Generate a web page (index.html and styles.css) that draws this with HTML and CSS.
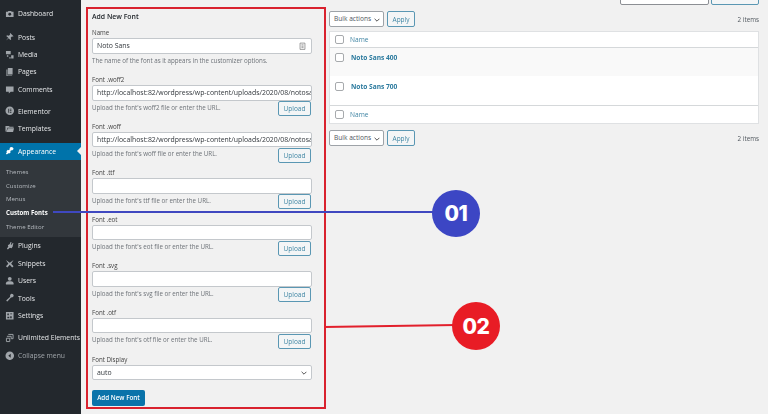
FILE: index.html
```html
<!DOCTYPE html>
<html lang="en">
<head>
<meta charset="utf-8">
<title>Custom Fonts</title>
<link rel="stylesheet" href="styles.css">
</head>
<body>
<div class="page">
  <nav class="sidebar">
    <ul class="group first">
      <li class="item"><svg class="ico" viewBox="0 0 20 20"><path d="M2 6h4l1-2h6l1 2h4v11H2z"/><circle cx="10" cy="11" r="3" fill="#23282d"/></svg>Dashboard</li>
    </ul>
    <ul class="group posts">
      <li class="item"><svg class="ico" viewBox="0 0 20 20"><path d="M11 2l7 7-2 1-1-1-3 3 1 4-2 1-3-4-6 5 5-6-4-3 1-2 4 1 3-3-1-1z"/></svg>Posts</li>
      <li class="item"><svg class="ico" viewBox="0 0 20 20"><path d="M2 2h10v7H2zM4 11h3v3H4zM13 11h5v7h-5zM9 15h3v3H9z"/></svg>Media</li>
      <li class="item"><svg class="ico" viewBox="0 0 20 20"><path d="M6 2h10v14H6zM3 5h2v13h10v1H3z"/></svg>Pages</li>
      <li class="item"><svg class="ico" viewBox="0 0 20 20"><path d="M2 3h16v11h-6l-4 4v-4H2z"/></svg>Comments</li>
    </ul>
    <ul class="group elementor">
      <li class="item"><svg class="ico" viewBox="0 0 20 20"><path fill-rule="evenodd" d="M10 1a9 9 0 1 1 0 18 9 9 0 0 1 0-18zM7 6v8h1.500V6zM10 6v1.500h3.500V6zM10 9.200v1.600h3.500V9.200zM10 12.500V14h3.500v-1.500z"/></svg>Elementor</li>
      <li class="item"><svg class="ico" viewBox="0 0 20 20"><path d="M1 4h7l2 2h8v2H5l-2 8H1zM6 9h13l-2 8H3z"/></svg>Templates</li>
    </ul>
    <div class="active-block">
      <div class="item current"><svg class="ico white" viewBox="0 0 20 20"><path d="M13 2c3 0 5 2 5 4s-3 4-5 3l-2 2 1 2-3 3-2-1-3 3-2-2 2-3-1-2 3-3 2 1 2-2c-1-2 1-5 3-5z"/></svg>Appearance<span class="notch"></span></div>
      <ul class="submenu">
        <li>Themes</li>
        <li>Customize</li>
        <li>Menus</li>
        <li class="on">Custom Fonts</li>
        <li>Theme Editor</li>
      </ul>
    </div>
    <ul class="group tight">
      <li class="item"><svg class="ico" viewBox="0 0 20 20"><path d="M12 2l2 1-2 4 2 1 2-4 2 1-2 4 1 1-3 5-4-1-4 4-2-2 3-4-1-3 5-3-1-1z"/></svg>Plugins</li>
      <li class="item"><svg class="ico" viewBox="0 0 20 20"><path d="M2 2l8 6 8-6-5 8 5 5-3 3-5-6-5 6-3-3 5-5z"/></svg>Snippets</li>
      <li class="item"><svg class="ico" viewBox="0 0 20 20"><circle cx="10" cy="6" r="4"/><path d="M2 18v-3c0-2 3-4 5-4h6c2 0 5 2 5 4v3z"/></svg>Users</li>
      <li class="item"><svg class="ico" viewBox="0 0 20 20"><path d="M13 2c3-1 6 2 5 5-1 2-3 3-5 2L6 17c-1 2-4 0-3-2l8-7c-1-2 0-5 2-6z"/></svg>Tools</li>
      <li class="item"><svg class="ico" viewBox="0 0 20 20"><path fill-rule="evenodd" d="M2 2h16v16H2zM5 5v4h3V5zM11 5v2h4V5zM11 11v4h3v-4zM5 12v3h4v-3z"/></svg>Settings</li>
    </ul>
    <ul class="group">
      <li class="item"><svg class="ico" viewBox="0 0 20 20"><path fill="none" stroke="#9ea3a8" stroke-width="2" d="M7 3h10v9H13M4 7h9v5M3 11h7v7H3z"/></svg>Unlimited Elements</li>
      <li class="item collapse"><svg class="ico" viewBox="0 0 20 20"><path fill-rule="evenodd" d="M10 1a9 9 0 1 1 0 18 9 9 0 0 1 0-18zM12 6l-5 4 5 4z"/></svg>Collapse menu</li>
    </ul>
  </nav>

  <main class="content">
    <form class="add-form">
      <h2 class="form-title">Add New Font</h2>

      <div class="field name-field">
        <label class="lbl">Name</label>
        <div class="input has-key">Noto Sans<svg class="key" viewBox="0 0 10 12"><path fill="none" stroke="#777" d="M1.500 1.500h7v9h-7zM3.500 4h3M3.500 6h3M3.500 8h3"/></svg></div>
        <p class="hint">The name of the font as it appears in the customizer options.</p>
      </div>

      <div class="field">
        <label class="lbl">Font .woff2</label>
        <div class="input">http://localhost:82/wordpress/wp-content/uploads/2020/08/notosans-regular.woff2</div>
        <div class="upload-row"><p class="hint">Upload the font's woff2 file or enter the URL.</p><button type="button" class="btn">Upload</button></div>
      </div>
      <div class="field">
        <label class="lbl">Font .woff</label>
        <div class="input">http://localhost:82/wordpress/wp-content/uploads/2020/08/notosans-regular.woff</div>
        <div class="upload-row"><p class="hint">Upload the font's woff file or enter the URL.</p><button type="button" class="btn">Upload</button></div>
      </div>
      <div class="field">
        <label class="lbl">Font .ttf</label>
        <div class="input"></div>
        <div class="upload-row"><p class="hint">Upload the font's ttf file or enter the URL.</p><button type="button" class="btn">Upload</button></div>
      </div>
      <div class="field">
        <label class="lbl">Font .eot</label>
        <div class="input"></div>
        <div class="upload-row"><p class="hint">Upload the font's eot file or enter the URL.</p><button type="button" class="btn">Upload</button></div>
      </div>
      <div class="field">
        <label class="lbl">Font .svg</label>
        <div class="input"></div>
        <div class="upload-row"><p class="hint">Upload the font's svg file or enter the URL.</p><button type="button" class="btn">Upload</button></div>
      </div>
      <div class="field">
        <label class="lbl">Font .otf</label>
        <div class="input"></div>
        <div class="upload-row"><p class="hint">Upload the font's otf file or enter the URL.</p><button type="button" class="btn">Upload</button></div>
      </div>
      <div class="field display-field">
        <label class="lbl">Font Display</label>
        <div class="input select">auto<svg class="chev" viewBox="0 0 10 6"><path fill="none" stroke="#444" stroke-width="1.500" d="M1 1l4 4 4-4"/></svg></div>
      </div>
      <button type="button" class="primary">Add New Font</button>
    </form>

    <section class="list">
      <div class="search-row">
        <div class="search-input"></div>
        <button type="button" class="btn search-btn">Search Fonts</button>
      </div>
      <div class="tablenav">
        <div class="bulk">Bulk actions<svg class="chev small" viewBox="0 0 10 6"><path fill="none" stroke="#444" stroke-width="1.500" d="M1 1l4 4 4-4"/></svg></div>
        <button type="button" class="btn apply">Apply</button>
        <span class="count">2 items</span>
      </div>
      <div class="table">
        <div class="row head"><span class="check"></span><span class="col-link">Name</span></div>
        <div class="row font alt"><span class="check"></span><span class="font-link">Noto Sans 400</span></div>
        <div class="row font"><span class="check"></span><span class="font-link">Noto Sans 700</span></div>
        <div class="row foot"><span class="check"></span><span class="col-link">Name</span></div>
      </div>
      <div class="tablenav lower">
        <div class="bulk">Bulk actions<svg class="chev small" viewBox="0 0 10 6"><path fill="none" stroke="#444" stroke-width="1.500" d="M1 1l4 4 4-4"/></svg></div>
        <button type="button" class="btn apply">Apply</button>
        <span class="count">2 items</span>
      </div>
    </section>
  </main>

  <div class="callout-line blue-line"></div>
  <div class="callout-dot blue-dot">01</div>
  <div class="callout-line red-line"></div>
  <div class="callout-dot red-dot">02</div>
</div>
</body>
</html>
```

FILE: styles.css
```css
*, *::before { box-sizing: border-box; }
html, body { margin: 0; padding: 0; }
body { font-family: "Open Sans", "Liberation Sans", sans-serif; background: #f1f1f1; }
ul { list-style: none; margin: 0; padding: 0; }
p, h2 { margin: 0; }

.page { position: relative; display: flex; width: 768px; height: 414px; overflow: hidden; background: #f1f1f1; }

/* Sidebar */
.sidebar { flex: 0 0 81px; width: 81px; min-width: 0; overflow: hidden; background: #23282d; color: #e4e6e8; font-size: 6.800px; padding-top: 5px; filter: blur(0.3px); }
.group { margin-top: 5px; }
.group.first { margin-top: 0; }
.group.posts { margin-top: 6px; }
.group.elementor { margin-top: 4.500px; }
.group.tight { margin-top: 0; }
.item { display: flex; align-items: center; height: 17.400px; padding-left: 4.500px; white-space: nowrap; }
.ico { width: 9.500px; height: 9.500px; margin-right: 4px; flex: none; fill: #a0a5aa; }
.ico.white { fill: #fff; }
.active-block { margin-top: 5.500px; }
.current { position: relative; background: #0073aa; color: #fff; height: 17px; }
.notch { position: absolute; right: 0; top: 4px; border: 4.500px solid transparent; border-left-width: 0; border-right-color: #f1f1f1; }
.submenu { background: #32373c; color: #b4b9be; font-size: 6.100px; padding: 5px 0 3.500px 6px; }
.submenu li { height: 13.800px; line-height: 13.800px; }
.submenu .on { color: #fff; font-weight: 700; }
.collapse { color: #a0a5aa; }

/* Content */
.content { flex: 1; min-width: 0; display: flex; align-items: flex-start; padding-left: 11px; filter: blur(0.3px); }

.add-form { position: relative; flex: 0 0 220px; width: 220px; color: #3c434a; padding-top: 12px; }
.add-form::before { content: ""; position: absolute; left: -6px; top: 7px; width: 240px; height: 402px; border: 2px solid #d9222e; pointer-events: none; }
.form-title { font-size: 6.900px; line-height: 10px; font-weight: 600; color: #23282d; margin-bottom: 7px; }
.field { height: 46.600px; }
.name-field { height: 47px; }
.display-field { height: 25px; }
.lbl { display: block; font-size: 6.200px; line-height: 8px; height: 9px; color: #444; }
.input { position: relative; height: 15.500px; padding: 0 4px; background: #fff; border: 1px solid #c4c8cc; border-radius: 2px; font-size: 6.900px; line-height: 13.500px; color: #32373c; overflow: hidden; white-space: nowrap; }
.hint { font-size: 6.200px; line-height: 8px; color: #6d7278; padding-top: 2.500px; white-space: nowrap; }
.name-field .hint { padding-top: 3px; }
.upload-row { display: flex; justify-content: space-between; align-items: flex-start; padding: 0.500px 1px 0 0; }
.key { position: absolute; right: 5px; top: 2.500px; width: 7px; height: 8.500px; }
.chev { position: absolute; right: 4px; top: 5px; width: 6px; height: 4px; }
.btn { font-family: inherit; font-size: 6.500px; color: #3f86a4; background: #f3f5f6; border: 1px solid #5a97b3; border-radius: 2px; padding: 0; height: 15px; width: 33px; }
.upload-row .btn { flex: none; }
.primary { display: block; margin-top: 9.500px; width: 53px; height: 15.500px; padding: 0; font-family: inherit; font-size: 6.300px; font-weight: 600; color: #fff; background: #0a73aa; border: 0; border-radius: 2px; }

/* List */
.list { flex: 0 0 430px; width: 430px; margin-left: 17px; }
.search-row { display: flex; justify-content: flex-end; align-items: flex-end; gap: 2px; height: 5px; }
.search-input { flex: none; width: 89px; height: 15px; background: #fff; border: 1px solid #8c8f94; border-radius: 2px; }
.search-btn { flex: none; width: 48px; }
.tablenav { display: flex; align-items: center; gap: 3px; margin-top: 6px; height: 16px; }
.tablenav.lower { margin-top: 6px; }
.bulk { position: relative; width: 55px; height: 16px; padding-left: 4px; font-size: 6.600px; line-height: 14px; color: #50575e; background: #fff; border: 1px solid #9ea3a8; border-radius: 2px; white-space: nowrap; }
.chev.small { right: 3.500px; top: 5.500px; }
.apply { width: 28px; height: 16px; }
.count { margin-left: auto; font-size: 6.300px; color: #50575e; }
.table { margin-top: 4px; background: #fff; border: 1px solid #dfe1e3; }
.row { display: flex; align-items: center; padding-left: 5px; }
.head { height: 16px; border-bottom: 1px solid #d5d8da; }
.foot { height: 18px; border-top: 1px solid #d5d8da; }
.font { height: 29px; align-items: flex-start; padding-top: 6px; }
.alt { height: 28px; padding-top: 5px; background: #f9f9f9; }
.check { flex: none; width: 8.500px; height: 8.500px; background: #fff; border: 1px solid #a7aaad; border-radius: 2px; }
.col-link { margin-left: 6.500px; font-size: 6.600px; color: #3f84a3; }
.font-link { margin-left: 7.500px; font-size: 6.600px; line-height: 9px; font-weight: 700; color: #2b7a9e; }

/* Callouts drawn over the screenshot */
.callout-line { position: absolute; }
.blue-line { left: 53px; top: 211px; width: 382px; height: 2px; background: #3f48c0; }
.red-line { left: 324px; top: 325px; width: 132px; height: 1.500px; background: #e2202c; transform: rotate(-0.8deg); }
.callout-dot { position: absolute; display: flex; align-items: center; justify-content: center; border-radius: 50%; color: #fff; font-family: Inter, "Open Sans", sans-serif; font-weight: 800; font-size: 21px; letter-spacing: -0.5px; }
.blue-dot { left: 432px; top: 190px; width: 48px; height: 47px; background: #3c46c4; }
.red-dot { left: 452px; top: 302px; width: 48px; height: 48px; background: #e81c25; }
```
